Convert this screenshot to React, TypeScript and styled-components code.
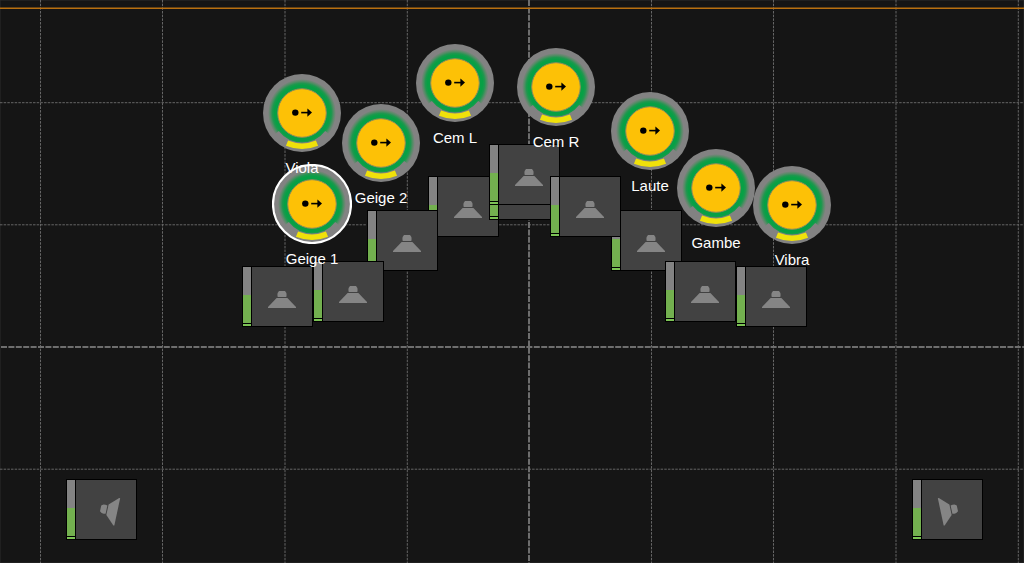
import React from "react";
import styled, { createGlobalStyle } from "styled-components";

const GlobalStyle = createGlobalStyle`
  body {
    margin: 0;
    background: #151515;
    font-family: "Liberation Sans", Arial, Helvetica, sans-serif;
  }
`;

const Stage = styled.main`
  position: relative;
  width: 100%;
  height: 100vh;
  overflow: hidden;
  background: #151515;
`;

const Grid = styled.svg`
  display: block;
  width: 100%;
  height: 100%;
`;

const Pin = styled.div<{ $x: number; $y: number }>`
  position: absolute;
  left: ${(p) => p.$x}px;
  top: ${(p) => p.$y}px;
`;

const SpeakerBox = styled(Pin)`
  display: flex;
  gap: 1px;
  padding: 1px;
  background: #000;
`;

const Meter = styled.div`
  display: flex;
  flex-direction: column;
  gap: 1px;
  width: 8px;
`;

const Level = styled.div`
  flex: 1;
  background: linear-gradient(#838383 28px, #73b04f 28px);
`;

const Floor = styled.div`
  height: 2px;
  background: #7cc355;
`;

const Face = styled.div`
  display: grid;
  place-items: center;
  width: 60px;
  height: 59px;
  background: #424242;
`;

const Cone = styled.svg<{ $turn: number }>`
  width: 40px;
  height: 41px;
  transform: rotate(${(p) => p.$turn}deg);
`;

const SourceBox = styled(Pin)`
  display: flex;
  flex-direction: column;
  align-items: center;
  gap: 7px;
  width: 80px;
`;

const Disc = styled.svg`
  width: 80px;
  height: 80px;
`;

/* Names stay readable above neighbouring discs. */
const Name = styled.span`
  position: relative;
  z-index: 1;
  color: #fff;
  font-size: 15px;
  line-height: 16px;
  white-space: nowrap;
`;

type SpeakerData = { id: string; x: number; y: number; turn?: number };
type SourceData = { name: string; x: number; y: number; selected?: boolean };

const speakers: SpeakerData[] = [
  { id: "front-1", x: 242, y: 266 },
  { id: "front-4", x: 428, y: 176 },
  { id: "front-3", x: 367, y: 210 },
  { id: "front-2", x: 313, y: 261 },
  { id: "center-low", x: 489, y: 159 },
  { id: "center", x: 489, y: 144 },
  { id: "front-7", x: 611, y: 210 },
  { id: "front-6", x: 550, y: 176 },
  { id: "front-8", x: 665, y: 261 },
  { id: "front-9", x: 736, y: 266 },
  { id: "rear-left", x: 66, y: 479, turn: -78 },
  { id: "rear-right", x: 912, y: 479, turn: 78 },
];

const sources: SourceData[] = [
  { name: "Viola", x: 302, y: 113 },
  { name: "Geige 2", x: 381, y: 143 },
  { name: "Cem L", x: 455, y: 83 },
  { name: "Cem R", x: 556, y: 87 },
  { name: "Laute", x: 650, y: 131 },
  { name: "Gambe", x: 716, y: 188 },
  { name: "Vibra", x: 792, y: 205 },
  { name: "Geige 1", x: 312, y: 204, selected: true },
];

const columns = [40.5, 162.5, 285, 407.3, 651.5, 773.5, 896, 1018.3];
const rows = [102.7, 224.8, 469.2];

function Speaker({ x, y, turn = 0 }: SpeakerData) {
  return (
    <SpeakerBox $x={x} $y={y}>
      <Meter>
        <Level />
        <Floor />
      </Meter>
      <Face>
        <Cone $turn={turn} viewBox="-20 -21 40 41" aria-hidden="true">
          <path
            d="M-4.3 0 L-4.6 -2 L-4.4 -4 L-3 -6 H3 L4.4 -4 L4.6 -2 L4.3 0 Z"
            fill="#858585"
          />
          <path d="M-5.4 1 H5.4 L14 10 V11 H-14 V10 Z" fill="#858585" />
        </Cone>
      </Face>
    </SpeakerBox>
  );
}

function Source({ name, x, y, selected }: SourceData) {
  return (
    <SourceBox $x={x - 40} $y={y - 40}>
      <Disc viewBox="-40 -40 80 80" aria-hidden="true">
        <circle r="39" fill="#828282" />
        <circle r="34" fill="url(#glow)" />
        <path
          d="M25.6 19.9 A32.4 32.4 0 0 1 -25.6 19.9"
          fill="none"
          stroke="#828282"
          strokeWidth="6"
        />
        <circle r="24.3" fill="#fdc106" stroke="#8f8a5c" />
        <path
          d="M-15 30.2 Q0 36.4 15 30.2"
          fill="none"
          stroke="#f0e10b"
          strokeWidth="5.6"
        />
        <circle cx="-6.7" cy="-0.4" r="3.2" />
        <path d="M-0.8 -0.4 H7" stroke="#000" strokeWidth="1.6" />
        <path d="M5.4 -4.6 L10 -0.4 L5.4 3.8 Z" />
        {selected && (
          <circle r="39" fill="none" stroke="#fff" strokeWidth="2.2" />
        )}
      </Disc>
      <Name>{name}</Name>
    </SourceBox>
  );
}

export default function App() {
  return (
    <>
      <GlobalStyle />
      <Stage>
        <Grid aria-hidden="true">
          <defs>
            <radialGradient id="glow">
              <stop offset="0.81" stopColor="#07a045" />
              <stop offset="0.87" stopColor="#1e984e" />
              <stop offset="0.94" stopColor="#5c8a6a" />
              <stop offset="1" stopColor="#828282" />
            </radialGradient>
          </defs>
          <rect width="100%" height="100%" fill="none" stroke="#2c2c2c" />
          <g stroke="#666" strokeDasharray="2.5 1.17">
            {columns.map((x) => (
              <line key={x} x1={x} x2={x} y1="0" y2="100%" />
            ))}
            {rows.map((y) => (
              <line key={y} x1="0" x2="100%" y1={y} y2={y} />
            ))}
          </g>
          <g stroke="#6e6e6e" strokeWidth="2" strokeDasharray="6 1.4">
            <line x1="529" x2="529" y1="0" y2="100%" />
            <line x1="1" x2="100%" y1="347" y2="347" />
          </g>
          <line
            x1="0"
            x2="100%"
            y1="8.3"
            y2="8.3"
            stroke="#b97010"
            strokeWidth="1.4"
          />
        </Grid>
        {speakers.map((s) => (
          <Speaker key={s.id} {...s} />
        ))}
        {sources.map((s) => (
          <Source key={s.name} {...s} />
        ))}
      </Stage>
    </>
  );
}
